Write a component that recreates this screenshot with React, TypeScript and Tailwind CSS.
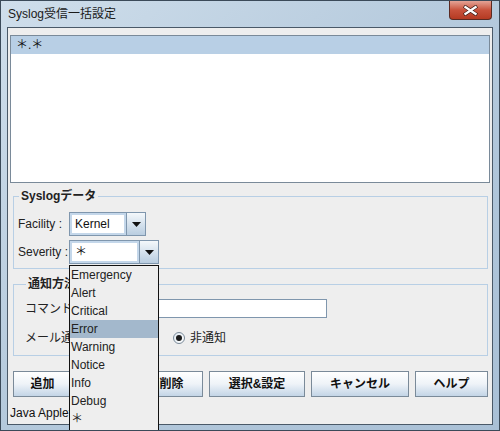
import React from 'react';

const severities = ['Emergency', 'Alert', 'Critical', 'Error', 'Warning', 'Notice', 'Info', 'Debug', '＊'];

const font = { fontFamily: '"Liberation Sans", "Noto Sans CJK JP", sans-serif' };

function ArrowButton() {
  return (
    <div className="w-[19px] h-full flex items-center justify-center border-l border-[#7f96ad] bg-gradient-to-b from-[#f4f8fb] to-[#b9cde0]">
      <svg width="9" height="5" viewBox="0 0 9 5">
        <path d="M0 0 H9 L4.5 5 Z" fill="#111" />
      </svg>
    </div>
  );
}

function Combo({ value, width }: { value: string; width: string }) {
  return (
    <div className={`${width} h-[24px] flex border border-[#7f96ad] bg-white`}>
      <div className="flex-1 flex items-center pl-[3px] border-2 border-[#c4d7ea] text-[12px] text-[#111]">
        {value}
      </div>
      <ArrowButton />
    </div>
  );
}

function Btn({ label, width }: { label?: string; width: string }) {
  return (
    <button
      className={`${width} h-[26px] flex items-center justify-center border border-[#7a8a99] bg-gradient-to-b from-[#ffffff] via-[#eef3f8] to-[#c3d5e6] text-[12px] font-bold text-[#111]`}
    >
      {label}
    </button>
  );
}

export default function App() {
  return (
    <div
      className="relative w-[500px] h-[431px] overflow-hidden border border-[#3b4a59] bg-gradient-to-br from-[#cfdeeb] via-[#b4c9dc] to-[#a9c0d6]"
      style={font}
    >
      {/* title bar */}
      <div className="h-[26px] flex items-center pl-[7px] text-[12px] text-[#1a1a1a]">Syslog受信一括設定</div>
      <div className="absolute top-0 right-[7px] w-[43px] h-[19px] rounded-b-[4px] border border-[#5a2a22] border-t-0 bg-gradient-to-b from-[#e3a396] via-[#c8523c] to-[#b53a22] flex items-center justify-center">
        <svg width="15" height="11" viewBox="0 0 15 11">
          <path d="M1 1 L14 10 M14 1 L1 10" stroke="#3a1a14" strokeWidth="3.6" />
          <path d="M1.5 1.5 L13.5 9.5 M13.5 1.5 L1.5 9.5" stroke="#ffffff" strokeWidth="2.2" />
        </svg>
      </div>

      {/* content panel */}
      <div className="mx-[6px] h-[398px] border border-[#4a5968] bg-[#eeeeee] flex flex-col">
        <div className="pt-[7px] px-[2px]">
          <div className="h-[148px] border border-[#7a8a99] bg-white">
            <div className="h-[18px] bg-[#b8cfe5] flex items-center pl-[5px] text-[12px] text-[#111]">＊.＊</div>
          </div>
        </div>

        <fieldset className="mt-[5px] ml-[5px] mr-[4px] border border-[#b8cfe5] pl-[4px] pt-[8px] pb-[4px] flex flex-col gap-[4px]">
          <legend className="ml-[1px] px-[2px] h-[16px] leading-[16px] text-[12px] font-bold text-[#222]">Syslogデータ</legend>
          <div className="flex items-center h-[24px]">
            <span className="w-[51px] text-[12px] text-[#222]">Facility :</span>
            <Combo value="Kernel" width="w-[77px]" />
          </div>
          <div className="flex items-center h-[24px]">
            <span className="w-[51px] text-[12px] text-[#222]">Severity :</span>
            <Combo value="＊" width="w-[90px]" />
          </div>
        </fieldset>

        <fieldset className="mt-[7px] ml-[5px] mr-[4px] h-[80px] border border-[#b8cfe5] pl-[11px] pt-[7px] flex flex-col">
          <legend className="ml-[1px] px-[2px] h-[16px] leading-[16px] text-[12px] font-bold text-[#222]">通知方法</legend>
          <div className="flex items-center h-[19px]">
            <span className="w-[60px] text-[12px] text-[#222]">コマンド</span>
            <div className="w-[242px] h-[19px] border border-[#7f96ad] bg-white" />
          </div>
          <div className="flex items-center h-[19px] mt-[10px]">
            <span className="w-[148px] text-[12px] text-[#222]">メール通知</span>
            <span className="w-[12px] h-[12px] rounded-full border border-[#7a8a99] bg-gradient-to-br from-[#dfe8f0] to-white flex items-center justify-center">
              <span className="w-[6px] h-[6px] rounded-full bg-[#1a1a1a]" />
            </span>
            <span className="ml-[5px] text-[12px] text-[#222]">非通知</span>
          </div>
        </fieldset>

        <div className="mt-[15px] ml-[5px] flex gap-[6px]">
          <Btn label="追加" width="w-[59px]" />
          <Btn width="w-[56px]" />
          <Btn label="削除" width="w-[63px]" />
          <Btn label="選択&設定" width="w-[96px]" />
          <Btn label="キャンセル" width="w-[98px]" />
          <Btn label="ヘルプ" width="w-[73px]" />
        </div>

        <div className="flex-1 flex items-center pl-[2px] pt-[4px] text-[12px] text-[#111]">Java Applet</div>
      </div>

      {/* severity popup */}
      <div className="absolute left-[68px] top-[264px] w-[90px] h-[166px] border border-[#111] bg-[#eeeeee] flex flex-col">
        {severities.map((s) => (
          <div
            key={s}
            className={`h-[18px] flex items-center pl-[1px] text-[12px] text-[#222] ${s === 'Error' ? 'bg-[#a3b8cc]' : ''}`}
          >
            {s}
          </div>
        ))}
      </div>
    </div>
  );
}
